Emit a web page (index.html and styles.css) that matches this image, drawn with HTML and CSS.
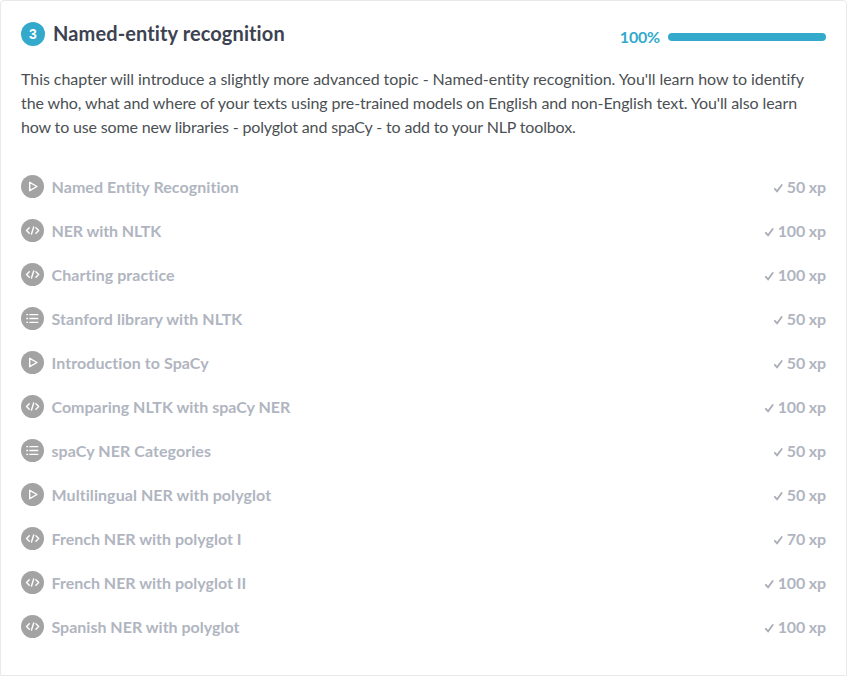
FILE: index.html
```html
<!DOCTYPE html>
<html lang="en">
<head>
<meta charset="utf-8">
<title>Named-entity recognition</title>
<link rel="stylesheet" href="styles.css">
</head>
<body>
<svg width="0" height="0" class="defs">
  <symbol id="video" viewBox="0 0 23 23"><circle cx="11.5" cy="11.5" r="11.5" fill="#a3a3a3"/><path d="M8.7 7.3v8.4l7.3-4.2z" fill="none" stroke="#fff" stroke-width="1.4" stroke-linejoin="round"/></symbol>
  <symbol id="code" viewBox="0 0 23 23"><circle cx="11.5" cy="11.5" r="11.5" fill="#a3a3a3"/><path d="M8.3 8.7l-2.8 2.8 2.8 2.8M14.9 8.7l2.8 2.8-2.8 2.8M12.7 8l-2.2 7" fill="none" stroke="#fff" stroke-width="1.4" stroke-linecap="round" stroke-linejoin="round"/></symbol>
  <symbol id="list" viewBox="0 0 23 23"><circle cx="11.5" cy="11.5" r="11.5" fill="#a3a3a3"/><path d="M5.3 7.6h1.8M5.3 11.5h1.8M5.3 15.4h1.8M8.3 7.6h9M8.3 11.5h9M8.3 15.4h9" fill="none" stroke="#fff" stroke-width="1.3"/></symbol>
  <symbol id="check" viewBox="0 0 10 10"><path d="M1.8 5.8l2.3 2.6L8.7 2" fill="none" stroke="#a9adb5" stroke-width="1.8" stroke-linecap="round"/></symbol>
</svg>
<section class="chapter">
  <header class="head">
    <span class="number">3</span>
    <h4 class="title">Named-entity recognition</h4>
    <span class="percent">100%</span>
    <span class="bar"></span>
  </header>
  <p class="description"><span class="loose">This chapter will introduce a slightly more advanced topic - Named-entity recognition. You'll learn how to identify</span><br>the who, what and where of your texts using pre-trained models on English and non-English text. You'll also learn<br><span class="snug">how to use some new libraries - polyglot and spaCy - to add to your NLP toolbox.</span></p>
  <ul class="exercises">
    <li><svg class="icon"><use href="#video"/></svg><span class="name">Named Entity Recognition</span><svg class="check"><use href="#check"/></svg><span class="xp">50 xp</span></li>
    <li><svg class="icon"><use href="#code"/></svg><span class="name tight">NER with NLTK</span><svg class="check"><use href="#check"/></svg><span class="xp">100 xp</span></li>
    <li><svg class="icon"><use href="#code"/></svg><span class="name">Charting practice</span><svg class="check"><use href="#check"/></svg><span class="xp">100 xp</span></li>
    <li><svg class="icon"><use href="#list"/></svg><span class="name">Stanford library with NLTK</span><svg class="check"><use href="#check"/></svg><span class="xp">50 xp</span></li>
    <li><svg class="icon"><use href="#video"/></svg><span class="name">Introduction to SpaCy</span><svg class="check"><use href="#check"/></svg><span class="xp">50 xp</span></li>
    <li><svg class="icon"><use href="#code"/></svg><span class="name even">Comparing NLTK with spaCy NER</span><svg class="check"><use href="#check"/></svg><span class="xp">100 xp</span></li>
    <li><svg class="icon"><use href="#list"/></svg><span class="name">spaCy NER Categories</span><svg class="check"><use href="#check"/></svg><span class="xp">50 xp</span></li>
    <li><svg class="icon"><use href="#video"/></svg><span class="name">Multilingual NER with polyglot</span><svg class="check"><use href="#check"/></svg><span class="xp">50 xp</span></li>
    <li><svg class="icon"><use href="#code"/></svg><span class="name even">French NER with polyglot I</span><svg class="check"><use href="#check"/></svg><span class="xp">70 xp</span></li>
    <li><svg class="icon"><use href="#code"/></svg><span class="name even">French NER with polyglot II</span><svg class="check"><use href="#check"/></svg><span class="xp">100 xp</span></li>
    <li><svg class="icon"><use href="#code"/></svg><span class="name even">Spanish NER with polyglot</span><svg class="check"><use href="#check"/></svg><span class="xp">100 xp</span></li>
  </ul>
</section>
</body>
</html>
```
FILE: styles.css
```css
* { box-sizing: border-box; }
body { margin: 0; background: #fff; font-family: Lato, sans-serif; font-size: 16px; font-variant-ligatures: none; color: #4b5054; }
.defs { display: block; }
.chapter { height: 676px; padding: 20px 20px 0; border: 1px solid #e6eaea; border-radius: 4px 4px 0 0; }
.head { display: flex; align-items: center; height: 26px; }
.number { width: 24px; height: 24px; margin-right: 8px; border-radius: 50%; background: #33aacc; color: #fff; font-family: "Liberation Sans", sans-serif; font-size: 14px; font-weight: 700; line-height: 24px; text-align: center; }
.title { flex: 1; margin: -2px 0 0; color: #3d4251; font-size: 20px; font-weight: 700; letter-spacing: 0.11px; line-height: 26px; }
.percent { margin: 5px 8px 0 0; color: #33aacc; font-weight: 700; letter-spacing: -0.2px; line-height: 24px; }
.bar { width: 158px; height: 8px; margin-top: 6px; border-radius: 4px; background: #33aacc; }
.description { margin: 20px 0 25px; letter-spacing: -0.1px; line-height: 24px; white-space: nowrap; }
.loose { letter-spacing: -0.048px; }
.snug { letter-spacing: -0.15px; }
.exercises { margin: 0; padding: 0; list-style: none; }
.exercises li { display: flex; align-items: center; height: 44px; color: #b0b5bf; font-weight: 700; }
.icon { width: 23px; height: 23px; margin-right: 7.5px; }
.name { flex: 1; letter-spacing: 0.07px; }
.even { letter-spacing: 0; }
.tight { letter-spacing: -0.1px; }
.xp { letter-spacing: -0.15px; }
.check { width: 10px; height: 10px; margin: 3px 4px 0 0; }
```
